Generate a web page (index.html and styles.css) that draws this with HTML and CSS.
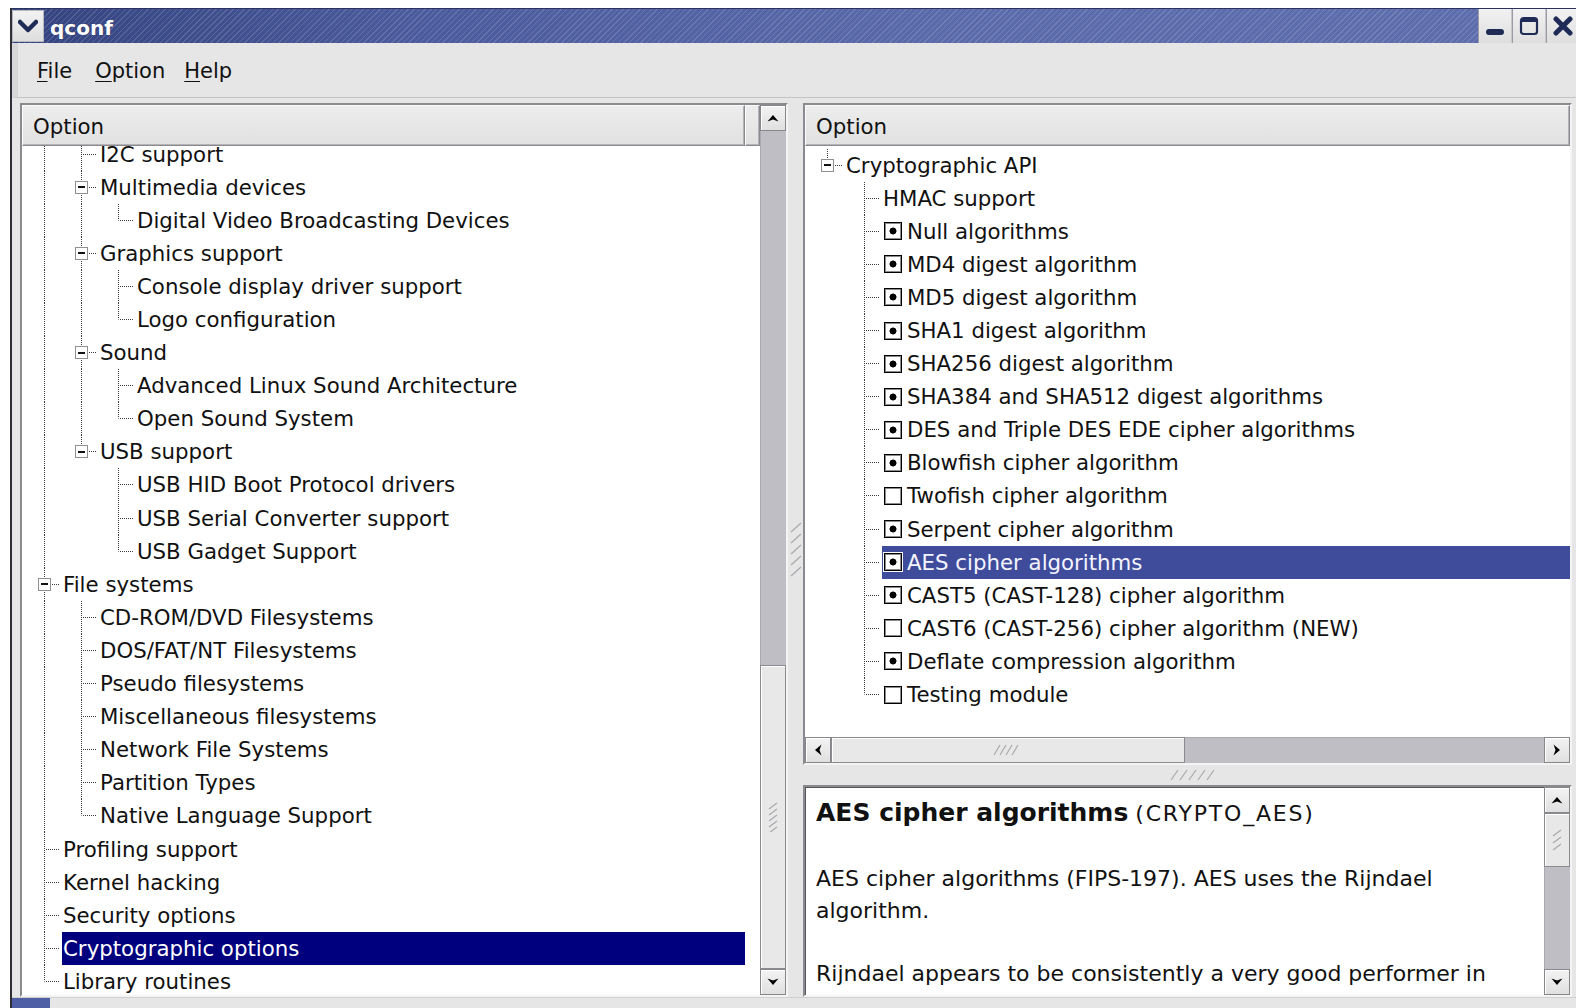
FILE: index.html
```html
<!DOCTYPE html>
<html lang="en">
<head>
<meta charset="utf-8">
<title>qconf</title>
<link rel="stylesheet" href="styles.css">
</head>
<body>
<div class="screen">
  <div class="window">
    <div class="titlebar">
      <div class="wm-btn menu-btn">
        <svg width="20" height="14" viewBox="0 0 20 14"><path d="M2 3 L10 11 L18 3" fill="none" stroke="#1f2b57" stroke-width="4.5" stroke-linecap="round" stroke-linejoin="round"/></svg>
      </div>
      <div class="title">qconf</div>
      <div class="wm-btn">
        <svg width="20" height="20" viewBox="0 0 20 20"><rect x="1" y="13" width="18" height="6" rx="3" fill="#1f2b57"/></svg>
      </div>
      <div class="wm-btn">
        <svg width="20" height="20" viewBox="0 0 20 20"><rect x="2" y="2" width="16" height="16" rx="2.5" fill="none" stroke="#1f2b57" stroke-width="2.2"/><rect x="2" y="2" width="16" height="4" rx="1.5" fill="#1f2b57"/></svg>
      </div>
      <div class="wm-btn close-btn">
        <svg width="22" height="20" viewBox="0 0 22 20"><path d="M4 3 L18 17 M18 3 L4 17" stroke="#1f2b57" stroke-width="5" stroke-linecap="round"/></svg>
      </div>
    </div>

    <div class="menubar">
      <span class="menu-item"><u>F</u>ile</span>
      <span class="menu-item"><u>O</u>ption</span>
      <span class="menu-item"><u>H</u>elp</span>
    </div>

    <div class="workspace">
      <!-- menu tree -->
      <div class="pane menu-pane">
        <div class="list-col">
          <div class="header"><div class="section short">Option</div><div class="section filler"></div></div>
          <div class="rows">
            <div class="rows-inner scrolled">
              <div class="row"><span class="c v"></span><span class="c t"></span><span class="label">I2C support</span></div>
              <div class="row"><span class="c v"></span><span class="c t"><i class="exp"></i></span><span class="label">Multimedia devices</span></div>
              <div class="row"><span class="c v"></span><span class="c v"></span><span class="c l"></span><span class="label">Digital Video Broadcasting Devices</span></div>
              <div class="row"><span class="c v"></span><span class="c t"><i class="exp"></i></span><span class="label">Graphics support</span></div>
              <div class="row"><span class="c v"></span><span class="c v"></span><span class="c t"></span><span class="label">Console display driver support</span></div>
              <div class="row"><span class="c v"></span><span class="c v"></span><span class="c l"></span><span class="label">Logo configuration</span></div>
              <div class="row"><span class="c v"></span><span class="c t"><i class="exp"></i></span><span class="label">Sound</span></div>
              <div class="row"><span class="c v"></span><span class="c v"></span><span class="c t"></span><span class="label">Advanced Linux Sound Architecture</span></div>
              <div class="row"><span class="c v"></span><span class="c v"></span><span class="c l"></span><span class="label">Open Sound System</span></div>
              <div class="row"><span class="c v"></span><span class="c l"><i class="exp"></i></span><span class="label">USB support</span></div>
              <div class="row"><span class="c v"></span><span class="c"></span><span class="c t"></span><span class="label">USB HID Boot Protocol drivers</span></div>
              <div class="row"><span class="c v"></span><span class="c"></span><span class="c t"></span><span class="label">USB Serial Converter support</span></div>
              <div class="row"><span class="c v"></span><span class="c"></span><span class="c l"></span><span class="label">USB Gadget Support</span></div>
              <div class="row"><span class="c t"><i class="exp"></i></span><span class="label">File systems</span></div>
              <div class="row"><span class="c v"></span><span class="c t"></span><span class="label">CD-ROM/DVD Filesystems</span></div>
              <div class="row"><span class="c v"></span><span class="c t"></span><span class="label">DOS/FAT/NT Filesystems</span></div>
              <div class="row"><span class="c v"></span><span class="c t"></span><span class="label">Pseudo filesystems</span></div>
              <div class="row"><span class="c v"></span><span class="c t"></span><span class="label">Miscellaneous filesystems</span></div>
              <div class="row"><span class="c v"></span><span class="c t"></span><span class="label">Network File Systems</span></div>
              <div class="row"><span class="c v"></span><span class="c t"></span><span class="label">Partition Types</span></div>
              <div class="row"><span class="c v"></span><span class="c l"></span><span class="label">Native Language Support</span></div>
              <div class="row"><span class="c t"></span><span class="label">Profiling support</span></div>
              <div class="row"><span class="c t"></span><span class="label">Kernel hacking</span></div>
              <div class="row"><span class="c t"></span><span class="label">Security options</span></div>
              <div class="row"><span class="c t"></span><span class="label sel-focus">Cryptographic options</span></div>
              <div class="row"><span class="c l"></span><span class="label">Library routines</span></div>
            </div>
          </div>
        </div>
        <div class="vscroll">
          <div class="sb-btn"><svg width="12" height="8" viewBox="0 0 12 8"><path d="M0.5 7.5 L6 1 L11.5 7.5 L6 5.5 Z"/></svg></div>
          <div class="sb-track"></div>
          <div class="sb-thumb tall">
            <svg width="12" height="30" viewBox="0 0 12 30" class="grip"><path d="M2 7 L10 1 M2 13 L10 7 M2 19 L10 13 M2 25 L10 19 M2 31 L10 25"/></svg>
          </div>
          <div class="sb-btn"><svg width="12" height="8" viewBox="0 0 12 8"><path d="M0.5 0.5 L6 7 L11.5 0.5 L6 2.5 Z"/></svg></div>
        </div>
      </div>

      <div class="vsplitter">
        <svg width="12" height="56" viewBox="0 0 12 56" class="grip"><path d="M1 10 L11 1 M1 21 L11 12 M1 32 L11 23 M1 43 L11 34 M1 54 L11 45"/></svg>
      </div>

      <div class="right-col">
        <!-- symbol list -->
        <div class="pane config-pane">
          <div class="header"><div class="section wide">Option</div></div>
          <div class="rows">
            <div class="rows-inner top-pad">
              <div class="row"><span class="c l"><i class="exp"></i></span><span class="label">Cryptographic API</span></div>
              <div class="row"><span class="c"></span><span class="c t"></span><span class="label">HMAC support</span></div>
              <div class="row"><span class="c"></span><span class="c t"></span><span class="label"><i class="chk on"></i>Null algorithms</span></div>
              <div class="row"><span class="c"></span><span class="c t"></span><span class="label"><i class="chk on"></i>MD4 digest algorithm</span></div>
              <div class="row"><span class="c"></span><span class="c t"></span><span class="label"><i class="chk on"></i>MD5 digest algorithm</span></div>
              <div class="row"><span class="c"></span><span class="c t"></span><span class="label"><i class="chk on"></i>SHA1 digest algorithm</span></div>
              <div class="row"><span class="c"></span><span class="c t"></span><span class="label"><i class="chk on"></i>SHA256 digest algorithm</span></div>
              <div class="row"><span class="c"></span><span class="c t"></span><span class="label"><i class="chk on"></i>SHA384 and SHA512 digest algorithms</span></div>
              <div class="row"><span class="c"></span><span class="c t"></span><span class="label"><i class="chk on"></i>DES and Triple DES EDE cipher algorithms</span></div>
              <div class="row"><span class="c"></span><span class="c t"></span><span class="label"><i class="chk on"></i>Blowfish cipher algorithm</span></div>
              <div class="row"><span class="c"></span><span class="c t"></span><span class="label"><i class="chk"></i>Twofish cipher algorithm</span></div>
              <div class="row"><span class="c"></span><span class="c t"></span><span class="label"><i class="chk on"></i>Serpent cipher algorithm</span></div>
              <div class="row"><span class="c"></span><span class="c t"></span><span class="label sel-blur"><i class="chk on"></i>AES cipher algorithms</span></div>
              <div class="row"><span class="c"></span><span class="c t"></span><span class="label"><i class="chk on"></i>CAST5 (CAST-128) cipher algorithm</span></div>
              <div class="row"><span class="c"></span><span class="c t"></span><span class="label"><i class="chk"></i>CAST6 (CAST-256) cipher algorithm (NEW)</span></div>
              <div class="row"><span class="c"></span><span class="c t"></span><span class="label"><i class="chk on"></i>Deflate compression algorithm</span></div>
              <div class="row"><span class="c"></span><span class="c l"></span><span class="label"><i class="chk"></i>Testing module</span></div>
            </div>
          </div>
          <div class="hscroll">
            <div class="sb-btn"><svg width="8" height="12" viewBox="0 0 8 12"><path d="M7.5 0.5 L1 6 L7.5 11.5 L5.5 6 Z"/></svg></div>
            <div class="sb-thumb wide-thumb">
              <svg width="30" height="12" viewBox="0 0 30 12" class="grip"><path d="M1 11 L7 1 M7 11 L13 1 M13 11 L19 1 M19 11 L25 1"/></svg>
            </div>
            <div class="sb-track"></div>
            <div class="sb-btn"><svg width="8" height="12" viewBox="0 0 8 12"><path d="M0.5 0.5 L7 6 L0.5 11.5 L2.5 6 Z"/></svg></div>
          </div>
        </div>

        <div class="hsplitter">
          <svg width="46" height="12" viewBox="0 0 46 12" class="grip"><path d="M1 11 L8 1 M10 11 L17 1 M19 11 L26 1 M28 11 L35 1 M37 11 L44 1"/></svg>
        </div>

        <!-- help text -->
        <div class="pane info-pane">
          <div class="info-text">
            <div class="info-head"><b>AES cipher algorithms</b> <span class="sym">(CRYPTO_AES)</span></div>
            <p>AES cipher algorithms (FIPS-197). AES uses the Rijndael<br>algorithm.</p>
            <p>Rijndael appears to be consistently a very good performer in<br>both hardware and software across a wide range of computing</p>
          </div>
          <div class="vscroll">
            <div class="sb-btn"><svg width="12" height="8" viewBox="0 0 12 8"><path d="M0.5 7.5 L6 1 L11.5 7.5 L6 5.5 Z"/></svg></div>
            <div class="sb-thumb short-thumb">
              <svg width="12" height="22" viewBox="0 0 12 22" class="grip"><path d="M2 7 L10 1 M2 14 L10 8 M2 21 L10 15"/></svg>
            </div>
            <div class="sb-track"></div>
            <div class="sb-btn"><svg width="12" height="8" viewBox="0 0 12 8"><path d="M0.5 0.5 L6 7 L11.5 0.5 L6 2.5 Z"/></svg></div>
          </div>
        </div>
      </div>
    </div>

    <div class="bottom-frame"><span class="panel-corner"></span></div>
  </div>
</div>
</body>
</html>
```

FILE: styles.css
```css
* { box-sizing: border-box; }

html, body {
  margin: 0;
  padding: 0;
}

body {
  width: 1576px;
  height: 1008px;
  overflow: hidden;
  background: #ffffff;
  font-family: "DejaVu Sans", "Bitstream Vera Sans", sans-serif;
  font-size: 21.3px;
  color: #111;
}

.screen {
  height: 1008px;
  padding: 8px 0 0 10px;
}

/* ---------- window frame ---------- */
.window {
  width: 1566px;
  height: 1000px;
  display: flex;
  flex-direction: column;
  background: #e6e6e6;
  border-left: 2px solid #2f2f35;
}

.titlebar {
  height: 35px;
  flex: none;
  display: flex;
  align-items: flex-start;
  border-top: 1px solid #2a3360;
  background:
    repeating-linear-gradient(135deg, rgba(255,255,255,0.14) 0 1px, rgba(255,255,255,0) 1px 4px),
    linear-gradient(to right, #34437f 0%, #4a5a9c 25%, #5a6aab 60%, #5e6ead 100%);
}

.wm-btn {
  width: 34px;
  height: 34px;
  flex: none;
  display: flex;
  align-items: center;
  justify-content: center;
  background: linear-gradient(#f2f2f2, #dedede);
  border-left: 1px solid #9a9aa2;
  border-right: 1px solid #c8c8cc;
}

.menu-btn {
  width: 32px;
  height: 32px;
  margin-top: 1px;
  border: 1px solid #b8b8bf;
}

.close-btn {
  width: 30px;
  border-right: none;
  justify-content: flex-start;
  padding-left: 5px;
}

.title {
  flex: 1;
  padding: 3px 0 0 6px;
  color: #fff;
  font-weight: bold;
  font-size: 20px;
  line-height: 32px;
  text-shadow: 0 0 1px #1c2450;
}

/* ---------- menu bar ---------- */
.menubar {
  height: 55px;
  flex: none;
  display: flex;
  align-items: center;
  gap: 19px;
  padding: 2px 0 0 19px;
  border-left: 6px solid #d7d7d9;
  border-bottom: 1px solid #c4c4c4;
  font-size: 21px;
}

.menu-item:first-child { margin-right: 4px; }

.menu-item u {
  text-decoration-thickness: 1px;
  text-underline-offset: 3px;
}

/* ---------- workspace ---------- */
.workspace {
  flex: 1;
  min-height: 0;
  display: flex;
  padding: 5px 4px 0 8px;
}

.pane {
  display: flex;
  background: #fff;
  border: 2px solid;
  border-color: #8b8b8f #f4f4f4 #f4f4f4 #8b8b8f;
  box-shadow: inset 1px 1px 0 #55555a;
}

.menu-pane {
  width: 768px;
  flex: none;
}

.list-col {
  flex: 1;
  min-width: 0;
  display: flex;
  flex-direction: column;
}

.header {
  height: 41px;
  flex: none;
  display: flex;
  background: #e6e6e6;
}

.section {
  height: 100%;
  display: flex;
  align-items: center;
  padding: 1px 0 0 10px;
  background: linear-gradient(#ededed, #e1e1e1);
  border: 1px solid;
  border-color: #fbfbfb #8a8a8e #8a8a8e #fbfbfb;
  box-shadow: inset -1px -1px 0 #b4b4b8;
}

.section.short { width: 723px; flex: none; }
.section.filler { flex: 1; }
.section.wide { flex: 1; }

.rows {
  flex: 1;
  min-height: 0;
  overflow: hidden;
  background: #fff;
}

.rows-inner.scrolled { margin-top: -8.5px; padding-right: 15px; }
.rows-inner.top-pad { padding-top: 2.5px; }

.row {
  height: 33.1px;
  display: flex;
  align-items: stretch;
  white-space: nowrap;
}

/* tree branch cells: dotted guides drawn as backgrounds */
.c {
  width: 37px;
  flex: none;
  display: flex;
  align-items: center;
}

.v {
  background: repeating-linear-gradient(to bottom, #3c3c3c 0 1px, transparent 1px 2px) 22px 0 / 1px 100% no-repeat;
}

.t {
  background:
    repeating-linear-gradient(to bottom, #3c3c3c 0 1px, transparent 1px 2px) 22px 0 / 1px 100% no-repeat,
    repeating-linear-gradient(to right, #3c3c3c 0 1px, transparent 1px 2px) 24px 50% / 14px 1px no-repeat;
}

.l {
  background:
    repeating-linear-gradient(to bottom, #3c3c3c 0 1px, transparent 1px 2px) 22px 0 / 1px 50% no-repeat,
    repeating-linear-gradient(to right, #3c3c3c 0 1px, transparent 1px 2px) 24px 50% / 14px 1px no-repeat;
}

.exp {
  width: 13px;
  height: 13px;
  margin-left: 16px;
  border: 1px solid #8f8f94;
  background: linear-gradient(#111, #111) center / 7px 2px no-repeat, #fff;
}

.label {
  flex: 1;
  display: flex;
  align-items: center;
  margin-left: 3px;
  padding-left: 1px;
}

.sel-focus {
  background: #00007e;
  color: #fff;
}

.sel-blur {
  background: #3f4c9c;
  color: #f4f4ff;
}

.chk {
  width: 18px;
  height: 18px;
  flex: none;
  margin: 0 5px 0 1px;
  border: 1px solid #000;
  background: #fff;
  box-shadow: inset 0 0 0 1px #8c8c90;
}

.chk.on {
  background: radial-gradient(circle, #000 0 3.2px, transparent 3.8px), #fff;
}

.sel-blur .chk { outline: 1px solid #fff; }

/* ---------- scroll bars ---------- */
.vscroll {
  width: 26px;
  flex: none;
  display: flex;
  flex-direction: column;
  background: #bfbec4;
}

.hscroll {
  height: 26px;
  flex: none;
  display: flex;
  background: #bfbec4;
}

.sb-btn {
  width: 26px;
  height: 26px;
  flex: none;
  display: flex;
  align-items: center;
  justify-content: center;
  background: linear-gradient(#f3f3f3, #e0e0e0);
  border: 1px solid #86868b;
  box-shadow: inset 1px 1px 0 #fff;
}

.sb-btn svg path { fill: #000; }

.sb-track {
  flex: 1;
  background: #bfbec4;
  border-left: 1px solid #a8a8ae;
}

.hscroll .sb-track { border-left: none; border-top: 1px solid #a8a8ae; }

.sb-thumb {
  flex: none;
  display: flex;
  align-items: center;
  justify-content: center;
  background: #e8e8e8;
  border: 1px solid #8a8a8f;
  box-shadow: inset 1px 1px 0 #fff;
}

.sb-thumb.tall { height: 304px; }
.sb-thumb.short-thumb { height: 54px; }
.sb-thumb.wide-thumb { width: 354px; }

.grip path {
  stroke: #a9a9ae;
  stroke-width: 1.2;
  fill: none;
}

/* ---------- splitters ---------- */
.vsplitter {
  width: 15px;
  flex: none;
  display: flex;
  align-items: center;
  justify-content: center;
}

.right-col {
  flex: 1;
  min-width: 0;
  display: flex;
  flex-direction: column;
}

.config-pane {
  height: 662px;
  flex: none;
  flex-direction: column;
}

.hsplitter {
  height: 20px;
  flex: none;
  display: flex;
  align-items: center;
  justify-content: center;
  padding-left: 10px;
}

.info-pane {
  flex: 1;
  min-height: 0;
}

.info-text {
  flex: 1;
  min-width: 0;
  overflow: hidden;
  padding: 8.5px 0 0 11px;
  font-size: 22px;
  white-space: nowrap;
}

.info-head {
  line-height: 33px;
  font-size: 22px;
}

.info-head b { font-size: 25px; }

.info-head .sym { letter-spacing: 1.8px; }

.info-text p {
  margin: 33.5px 0 0;
  line-height: 32px;
}

.info-text p + p { margin-top: 31px; }

/* ---------- bottom edge ---------- */
.bottom-frame {
  height: 11px;
  flex: none;
  display: flex;
  border-top: 1px solid #cfcfcf;
}

.panel-corner {
  width: 38px;
  background: #4f5fa6;
}
```
